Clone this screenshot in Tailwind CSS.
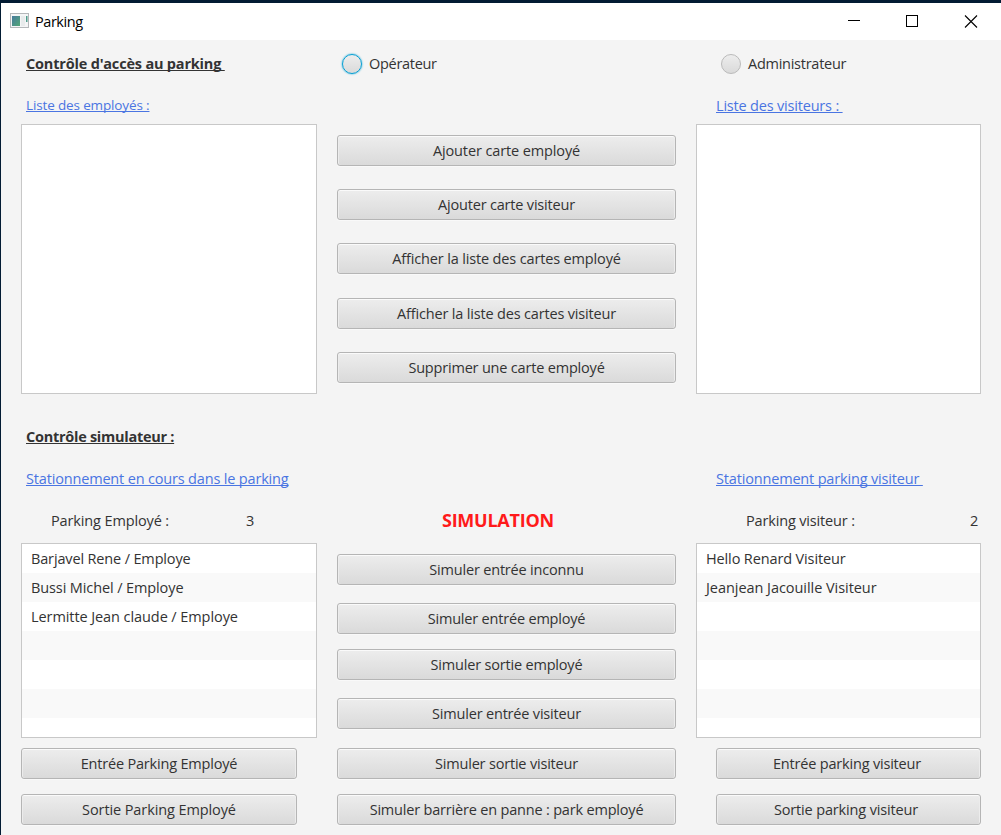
<!DOCTYPE html>
<html lang="fr">
<head>
<meta charset="utf-8">
<title>Parking</title>
<script src="https://cdn.jsdelivr.net/npm/@tailwindcss/browser@4"></script>
<style>
body{text-decoration-skip-ink:none}
.btn{display:flex;align-items:center;justify-content:center;height:31px;border:1px solid #b5b5b5;border-radius:3px;background:linear-gradient(#ededed,#dadada);box-shadow:inset 0 1px 0 #fafafa,inset 1px 0 0 #ececec,inset -1px 0 0 #ececec,0 1px 0 #f9f9f9;flex-shrink:0;white-space:pre}
</style>
</head>
<body class="w-[1001px] h-[835px] overflow-hidden bg-[#f4f4f4] border-t-[3px] border-l border-[#021b33] font-['Open_Sans',sans-serif] text-[14.5px] leading-5 tracking-[-0.19px] text-[#333]">
<header class="h-[37px] bg-white flex items-center pl-[9px] text-black">
  <svg class="w-[19px] h-4 shrink-0 -mt-0.5" viewBox="0 0 19 16"><defs><linearGradient id="g" x1="0" y1="0" x2="1" y2="1"><stop offset="0" stop-color="#467a9c"/><stop offset="1" stop-color="#52a777"/></linearGradient></defs><rect x=".5" y=".5" width="18" height="14" fill="#f4f5f6" stroke="#b4b7ba"/><rect x="2" y="3" width="8" height="10" fill="url(#g)"/><rect x="11" y="3" width="4" height="10" fill="#e8ebec"/><rect x="16" y="3" width="1.5" height="6" fill="#4f9c8c"/></svg>
  <span class="ml-1.5 text-[14.5px] tracking-[-0.45px]">Parking</span>
  <svg class="ml-auto w-[130px] h-[14px] mr-[23px] -mt-0.5" viewBox="0 0 130 14" fill="none" stroke="#000" shape-rendering="crispEdges"><path d="M0 6.500h12M58.500 1.500h11v11h-11z"/><path shape-rendering="auto" stroke-width="1.1" d="M117 1.500l12 12M129 1.500l-12 12"/></svg>
</header>
<main class="ml-5 grid grid-cols-[296px_339px_285px] gap-x-5">
  <div class="h-12 flex items-center pl-[5px] font-bold underline whitespace-pre">Contrôle d'accès au parking </div>
  <div class="h-12 flex items-center pl-[5px]"><i class="size-5 rounded-full border border-[#039ed3] bg-linear-to-b from-[#ededed] to-[#dadada] shadow-[0_0_2px_#039ed3] mr-[7px]"></i><span class="tracking-[-0.3px]">Opérateur</span></div>
  <div class="h-12 flex items-center pl-[25px]"><i class="size-5 rounded-full border border-[#bababa] bg-linear-to-b from-[#ededed] to-[#dadada] mr-[7px]"></i><span class="tracking-[-0.26px]">Administrateur</span></div>

  <div class="h-9 flex items-center pl-[5px] pb-0.5 text-[13.5px] tracking-[-0.14px] text-[#4a75e2] underline whitespace-pre">Liste des employés :</div>
  <div></div>
  <div class="h-9 flex items-center pl-5 text-[#4a75e2] underline whitespace-pre">Liste des visiteurs : </div>

  <div class="h-[270px] bg-white border border-[#c8c8c8]"></div>
  <div class="pt-[11px] flex flex-col gap-[23px]">
    <button class="btn tracking-[-0.12px]">Ajouter carte employé</button>
    <button class="btn">Ajouter carte visiteur</button>
    <button class="btn tracking-[-0.15px]">Afficher la liste des cartes employé</button>
    <button class="btn mt-px tracking-[-0.17px]">Afficher la liste des cartes visiteur</button>
    <button class="btn">Supprimer une carte employé</button>
  </div>
  <div class="h-[270px] bg-white border border-[#c8c8c8]"></div>

  <div class="col-span-3 h-16 pt-[22px] flex items-center pl-[5px] font-bold tracking-[-0.27px] underline">Contrôle simulateur :</div>

  <div class="h-[42px] flex items-center pl-[5px] tracking-[-0.17px] text-[#4a75e2] underline">Stationnement en cours dans le parking</div>
  <div></div>
  <div class="h-[42px] flex items-center pl-5 tracking-[-0.17px] text-[#4a75e2] underline whitespace-pre">Stationnement parking visiteur </div>

  <div class="h-[43px] flex items-center pb-px pl-[30px]"><span class="w-[195px] tracking-[-0.13px]">Parking Employé :</span><span>3</span></div>
  <div class="h-[43px] flex items-center pb-[3px] pl-[105px] font-bold text-lg tracking-[-0.25px] text-[#ff1a1a]">SIMULATION</div>
  <div class="h-[43px] flex items-center pb-px pl-[50px] pr-[3px] justify-between"><span class="tracking-[-0.16px]">Parking visiteur :</span><span>2</span></div>

  <div>
    <ul class="h-[195px] bg-white border border-[#c8c8c8] overflow-hidden">
      <li class="h-[29px] px-[9px] py-[5px] tracking-[-0.15px]">Barjavel Rene / Employe</li>
      <li class="h-[29px] px-[9px] py-[5px] tracking-[-0.11px] bg-[#f9f9f9]">Bussi Michel / Employe</li>
      <li class="h-[29px] px-[9px] py-[5px] tracking-[-0.08px]">Lermitte Jean claude / Employe</li>
      <li class="h-[29px] bg-[#f9f9f9]"></li><li class="h-[29px]"></li><li class="h-[29px] bg-[#f9f9f9]"></li>
    </ul>
    <div class="mt-2.5 w-[276px] flex flex-col gap-[15px]">
      <button class="btn">Entrée Parking Employé</button>
      <button class="btn tracking-[-0.1px]">Sortie Parking Employé</button>
    </div>
  </div>
  <div class="pt-[11px] flex flex-col">
    <button class="btn">Simuler entrée inconnu</button>
    <button class="btn mt-[18px]">Simuler entrée employé</button>
    <button class="btn mt-[15px]">Simuler sortie employé</button>
    <button class="btn mt-[18px]">Simuler entrée visiteur</button>
    <button class="btn mt-[19px]">Simuler sortie visiteur</button>
    <button class="btn mt-[15px]">Simuler barrière en panne : park employé</button>
  </div>
  <div>
    <ul class="h-[195px] bg-white border border-[#c8c8c8] overflow-hidden">
      <li class="h-[29px] px-[9px] py-[5px] tracking-[-0.13px]">Hello Renard Visiteur</li>
      <li class="h-[29px] px-[9px] py-[5px] tracking-[-0.05px] bg-[#f9f9f9]">Jeanjean Jacouille Visiteur</li>
      <li class="h-[29px]"></li><li class="h-[29px] bg-[#f9f9f9]"></li><li class="h-[29px]"></li><li class="h-[29px] bg-[#f9f9f9]"></li>
    </ul>
    <div class="mt-2.5 ml-5 flex flex-col gap-[15px]">
      <button class="btn pr-[3px]">Entrée parking visiteur</button>
      <button class="btn pr-[5px] tracking-[-0.15px]">Sortie parking visiteur</button>
    </div>
  </div>
</main>
</body>
</html>
